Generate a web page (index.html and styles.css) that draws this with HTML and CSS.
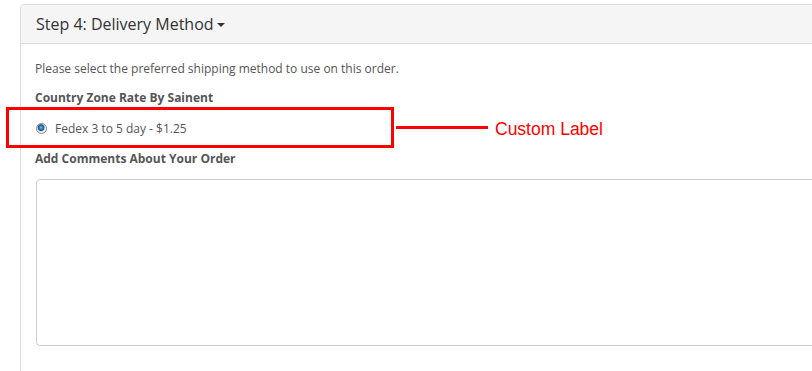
FILE: index.html
```html
<!DOCTYPE html>
<html>
<head>
<meta charset="utf-8">
<link rel="stylesheet" href="styles.css">
</head>
<body>
<div class="page">
  <div class="panel">
    <div class="panel-heading">
      <span class="panel-title">Step 4: Delivery Method</span><span class="caret"></span>
    </div>
    <div class="panel-body">
      <p class="intro">Please select the preferred shipping method to use on this order.</p>
      <div class="group-title">Country Zone Rate By Sainent</div>
      <label class="option"><span class="radio"></span>Fedex 3 to 5 day - $1.25</label>
      <div class="group-title comments-title">Add Comments About Your Order</div>
      <div class="comments"></div>
    </div>
  </div>
  <div class="highlight"></div>
  <div class="callout-line"></div>
  <div class="callout-text">Custom Label</div>
</div>
</body>
</html>
```
FILE: styles.css
```css
html, body {
  margin: 0;
  padding: 0;
  background: #fff;
  overflow: hidden;
}
.page {
  position: relative;
  width: 812px;
  height: 371px;
  overflow: hidden;
  font-family: "Open Sans", sans-serif;
}
.panel {
  margin: 4px 0 0 20px;
  width: 900px;
  height: 500px;
  border: 1px solid #dddddd;
  border-radius: 4px;
  background: #fff;
}
.panel-heading {
  height: 38px;
  background: #f5f5f5;
  border-bottom: 1px solid #dddddd;
  border-radius: 4px 4px 0 0;
  display: flex;
  align-items: center;
  padding-left: 15px;
}
.panel-title {
  font-size: 16px;
  color: #333;
  line-height: 20px;
}
.caret {
  display: inline-block;
  width: 0;
  height: 0;
  margin-left: 3px;
  margin-top: 2px;
  border-top: 4px solid #333;
  border-left: 4px solid transparent;
  border-right: 4px solid transparent;
}
.panel-body {
  padding: 16px 14px 0 14px;
}
.intro {
  margin: 0;
  font-size: 12px;
  line-height: 17px;
  color: #555;
}
.group-title {
  margin-top: 12px;
  font-size: 12px;
  line-height: 17px;
  font-weight: bold;
  color: #555;
}
.option {
  display: flex;
  align-items: center;
  margin-top: 14px;
  font-size: 12px;
  line-height: 17px;
  color: #555;
}
.radio {
  box-sizing: border-box;
  width: 11px;
  height: 11px;
  border: 1px solid #8a8a8a;
  border-radius: 50%;
  margin: 0 8px 0 1px;
  background: radial-gradient(circle at 45% 40%, #7cc8f4 0, #2a84c6 1.5px, #14508a 3px, #d4d4d4 3.7px, #f2f2f2 4.5px);
}
.comments-title {
  margin-top: 13px;
}
.comments {
  margin-top: 12px;
  margin-left: 1px;
  height: 165px;
  width: 820px;
  border: 1px solid #cccccc;
  border-radius: 4px;
}
.highlight {
  position: absolute;
  left: 6px;
  top: 107px;
  width: 382px;
  height: 35px;
  border: 3px solid #ff0000;
}
.callout-line {
  position: absolute;
  left: 396px;
  top: 126px;
  width: 92px;
  height: 3px;
  background: #ff0000;
}
.callout-text {
  position: absolute;
  left: 495px;
  top: 118px;
  font-family: "Liberation Sans", Arial, sans-serif;
  font-size: 17.5px;
  line-height: 22px;
  color: #ff0000;
}
```
